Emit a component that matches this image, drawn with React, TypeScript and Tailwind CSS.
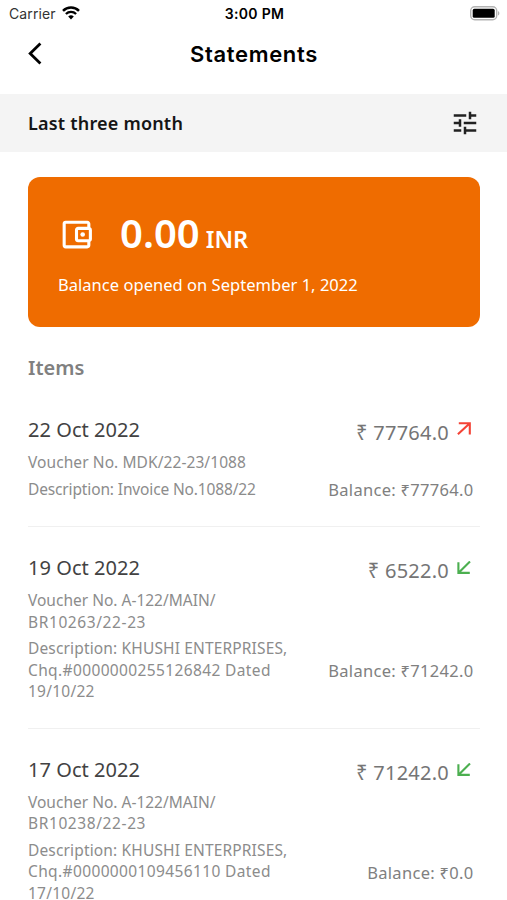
import { MdOutlineAccountBalanceWallet, MdTune } from 'react-icons/md';

type Line = { text: string; className?: string };

type Statement = {
  date: string;
  voucher: Line[];
  description: Line[];
  amount: string;
  balance: string;
  type: 'debit' | 'credit';
};

const statements: Statement[] = [
  {
    date: '22 Oct 2022',
    voucher: [{ text: 'Voucher No. MDK/22-23/1088', className: 'tracking-[0.08px]' }],
    description: [{ text: 'Description: Invoice No.1088/22', className: 'tracking-[-0.14px]' }],
    amount: '77764.0',
    balance: '77764.0',
    type: 'debit',
  },
  {
    date: '19 Oct 2022',
    voucher: [
      { text: 'Voucher No. A-122/MAIN/' },
      { text: 'BR10263/22-23', className: 'tracking-[0.6px]' },
    ],
    description: [
      { text: 'Description: KHUSHI ENTERPRISES,', className: 'tracking-[0.15px]' },
      { text: 'Chq.#0000000255126842 Dated', className: 'tracking-[0.37px]' },
      { text: '19/10/22', className: 'tracking-[0.25px]' },
    ],
    amount: '6522.0',
    balance: '71242.0',
    type: 'credit',
  },
  {
    date: '17 Oct 2022',
    voucher: [
      { text: 'Voucher No. A-122/MAIN/' },
      { text: 'BR10238/22-23', className: 'tracking-[0.6px]' },
    ],
    description: [
      { text: 'Description: KHUSHI ENTERPRISES,', className: 'tracking-[0.15px]' },
      { text: 'Chq.#0000000109456110 Dated', className: 'tracking-[0.37px]' },
      { text: '17/10/22', className: 'tracking-[0.25px]' },
    ],
    amount: '71242.0',
    balance: '0.0',
    type: 'credit',
  },
];

function StatusBar() {
  return (
    <div className="grid h-7 grid-cols-3 items-center pr-[7px] pl-[9px] font-['Inter',sans-serif] text-sm text-black">
      <div className="flex items-center gap-1.5">
        <span className="tracking-[0.1px] text-[#333]">Carrier</span>
        <svg className="-mt-0.5" width="18" height="14" viewBox="0 0 18 14" fill="none" stroke="currentColor">
          <path d="M1 4.9a11.4 11.4 0 0 1 16 0" strokeWidth="2.5" />
          <path d="M3.9 8a7.3 7.3 0 0 1 10.2 0" strokeWidth="2.3" />
          <path d="M9 13.4 6.2 10.5a4 4 0 0 1 5.6 0Z" fill="currentColor" stroke="none" />
        </svg>
      </div>
      <span className="text-center font-semibold tracking-[0.3px]">3:00 PM</span>
      <svg className="-mt-0.5 justify-self-end" width="31" height="15" viewBox="0 0 31 15">
        <rect x="1.7" y="0.8" width="26" height="13" rx="4" fill="#fff" stroke="#b3b3b3" strokeWidth="1.4" />
        <rect x="3.7" y="2.8" width="22" height="9" rx="1.6" fill="#000" />
        <path d="M29 5v4.6c1.9-.8 1.9-3.8 0-4.6Z" fill="#b3b3b3" />
      </svg>
    </div>
  );
}

function Arrow({ type }: { type: Statement['type'] }) {
  if (type === 'debit') {
    return (
      <svg className="mt-1" width="14" height="14" viewBox="0 0 14 14" fill="none" stroke="#f44336" strokeWidth="2.1">
        <path d="M1.8 1.2h11v11.3M12.8 1.2.9 12.3" />
      </svg>
    );
  }
  return (
    <svg className="mt-[5px]" width="14" height="14" viewBox="0 0 14 14" fill="none" stroke="#4caf50" strokeWidth="2.1">
      <path d="M1.4 1.3v10.6h11.4M1.4 11.9 13 .5" />
    </svg>
  );
}

function StatementRow({ item }: { item: Statement }) {
  return (
    <div className="border-b border-[#f0f0f0] pt-[29px] pb-[24.5px] text-[15.5px] leading-[21.75px] text-[#8c8c8c]">
      <div className="flex justify-between">
        <div>
          <div className="text-[20px] leading-6 tracking-[0.05px] text-[#424242]">{item.date}</div>
          <div className="mt-2.5">
            {item.voucher.map((line) => (
              <div key={line.text} className={line.className}>
                {line.text}
              </div>
            ))}
          </div>
        </div>
        <div className="flex items-start gap-2 pr-[9px]">
          <span className="pt-[3px] text-[20px] leading-6 tracking-[0.25px] text-[#757575]">₹ {item.amount}</span>
          <Arrow type={item.type} />
        </div>
      </div>
      <div className="mt-[4.5px] flex items-center justify-between pr-[6.5px]">
        <div>
          {item.description.map((line) => (
            <div key={line.text} className={line.className}>
              {line.text}
            </div>
          ))}
        </div>
        <div className="pt-px text-[16.5px] leading-[22px] tracking-[0.3px] text-[#808080]">
          Balance: ₹{item.balance}
        </div>
      </div>
    </div>
  );
}

export default function App() {
  return (
    <div className="h-[900px] overflow-hidden bg-white font-['Noto_Sans',sans-serif]">
      <StatusBar />

      <header className="grid h-[66px] grid-cols-[60px_1fr_60px] items-start pt-3">
        <button className="pt-0.5 pl-[27px]" aria-label="Back">
          <svg width="16" height="23" viewBox="0 0 16 23" fill="none" stroke="#000" strokeWidth="2.8">
            <path d="M13.4 1.5 3.2 11.5l10.2 10" />
          </svg>
        </button>
        <h1 className="pl-px text-center font-['Inter',sans-serif] text-[22px] leading-7 font-semibold tracking-[0.65px] text-black">
          Statements
        </h1>
      </header>

      <div className="flex h-[58px] items-center justify-between bg-[#f4f4f4] px-7 text-[#151515]">
        <span className="text-lg font-semibold tracking-[0.2px]">Last three month</span>
        <MdTune size={30} className="-mr-px text-[#212121]" />
      </div>

      <main className="pt-[25px] pr-[27px] pl-7">
        <section className="h-[150px] rounded-xl bg-[#ef6c00] pt-9 pl-[30px] text-white">
          <div className="flex h-[42px] items-center">
            <MdOutlineAccountBalanceWallet size={37} />
            <div className="ml-[25px] flex items-baseline gap-1.5 pt-px">
              <span className="text-[40px] leading-[42px] font-semibold">0.00</span>
              <span className="text-[23.5px] font-semibold">INR</span>
            </div>
          </div>
          <p className="mt-[18px] text-[16.5px] leading-6 tracking-[0.03px]">
            Balance opened on September 1, 2022
          </p>
        </section>

        <h2 className="mt-[29px] text-xl leading-6 font-semibold text-[#808080]">Items</h2>

        <div className="mt-[9px]">
          {statements.map((item) => (
            <StatementRow key={item.date} item={item} />
          ))}
        </div>
      </main>
    </div>
  );
}
